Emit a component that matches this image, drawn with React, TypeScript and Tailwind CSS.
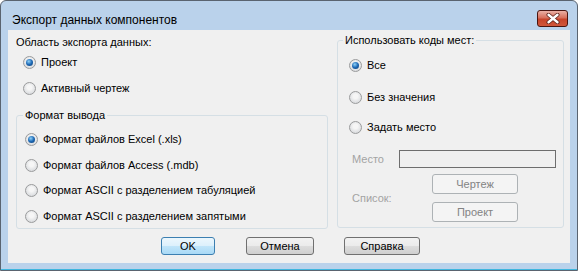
import React from 'react';

const Radio = ({ checked }: { checked?: boolean }) => (
  <span className="w-[13px] h-[13px] shrink-0 rounded-full border border-[#9a9b9c] bg-[radial-gradient(circle_at_50%_40%,#f6f6f6_25%,#cdd0d4)] flex items-center justify-center">
    {checked && (
      <span className="w-[7px] h-[7px] rounded-full bg-[radial-gradient(circle_at_40%_35%,#8fd2f8,#1d68b5_50%,#0c3b6d)]" />
    )}
  </span>
);

const RadioRow = ({ label, checked, className }: { label: string; checked?: boolean; className: string }) => (
  <div className={'flex items-center h-[20px] ' + className}>
    <Radio checked={checked} />
    <span className="ml-[5px] leading-[14px]">{label}</span>
  </div>
);

const Btn = ({ label, w, primary }: { label: string; w: string; primary?: boolean }) => (
  <button
    className={
      'h-[18px] rounded-[3px] border leading-[14px] text-black ' +
      w +
      (primary
        ? ' border-[#3c7fb1] bg-[linear-gradient(#ecf7fd,#dcf0fc_50%,#c1e5fa_50%,#a9d9f6)]'
        : ' border-[#707070] bg-[linear-gradient(#f2f2f2,#ebebeb_50%,#dddddd_50%,#cfcfcf)]')
    }
  >
    {label}
  </button>
);

const DisabledBtn = ({ label }: { label: string }) => (
  <button className="w-[86px] h-[20px] rounded-[3px] border border-[#adb2b5] bg-[#f4f4f4] text-[#838383] leading-[14px]">
    {label}
  </button>
);

export default function App() {
  return (
    <div className="w-[578px] h-[271px] flex flex-col bg-[#bad2eb] border border-[#5a6470] rounded-t-[6px] text-[11px] text-black font-['Liberation_Sans',Arial,sans-serif]">
      {/* title bar */}
      <div className="h-[29px] flex items-start justify-between pl-[11px] pr-[9px]">
        <span className="mt-[12px] text-[12px] leading-[14px]">Экспорт данных компонентов</span>
        <button className="mt-[9px] w-[31px] h-[17px] rounded-[3px] border border-[#4a1510] bg-[linear-gradient(#eab0a5,#d8705c_45%,#c7442b_55%,#d0573b)] flex items-center justify-center">
          <svg width="14" height="11" viewBox="0 0 14 11">
            <path d="M2.5 1.8 L11.5 9.2 M11.5 1.8 L2.5 9.2" stroke="#5b2018" strokeWidth="4" strokeLinecap="round" />
            <path d="M2.5 1.8 L11.5 9.2 M11.5 1.8 L2.5 9.2" stroke="#ffffff" strokeWidth="2.4" strokeLinecap="round" />
          </svg>
        </button>
      </div>

      {/* client area */}
      <div className="mx-[7px] h-[233px] bg-[#f0f0f0] flex flex-col">
        <div className="flex pl-[8px]">
          {/* left column */}
          <div className="w-[312px] flex flex-col pt-[5px]">
            <div className="leading-[14px]">Область экспорта данных:</div>
            <RadioRow className="mt-[3px] pl-[7px]" label="Проект" checked />
            <RadioRow className="mt-[6px] pl-[7px]" label="Активный чертеж" />
            <fieldset className="mt-[10px] h-[121px] border border-[#d5dfe5] rounded-[3px]">
              <legend className="ml-[6px] px-[2px] leading-[14px]">Формат вывода</legend>
              <div className="flex flex-col pl-[8px]">
                <RadioRow className="mt-[7px]" label="Формат файлов Excel (.xls)" checked />
                <RadioRow className="mt-[6px]" label="Формат файлов Access (.mdb)" />
                <RadioRow className="mt-[5px]" label="Формат ASCII с разделением табуляцией" />
                <RadioRow className="mt-[6px]" label="Формат ASCII с разделением запятыми" />
              </div>
            </fieldset>
          </div>

          {/* right column */}
          <fieldset className="ml-[9px] mt-[3px] w-[227px] h-[195px] border border-[#d5dfe5] rounded-[3px]">
            <legend className="ml-[5px] px-[2px] leading-[14px]">Использовать коды мест:</legend>
            <div className="flex flex-col pl-[11px] pr-[7px]">
              <RadioRow className="mt-[8px]" label="Все" checked />
              <RadioRow className="mt-[12px]" label="Без значения" />
              <RadioRow className="mt-[10px]" label="Задать место" />
              <div className="mt-[13px] flex items-center h-[18px]">
                <span className="ml-[3px] w-[47px] text-[#a3a3a3] leading-[14px]">Место</span>
                <div className="flex-1 h-[18px] border border-[#6e6e6e] bg-[#f0f0f0]" />
              </div>
              <div className="mt-[6px] flex items-center">
                <span className="ml-[3px] w-[80px] text-[#a3a3a3] leading-[14px]">Список:</span>
                <div className="flex flex-col gap-[8px]">
                  <DisabledBtn label="Чертеж" />
                  <DisabledBtn label="Проект" />
                </div>
              </div>
            </div>
          </fieldset>
        </div>

        {/* dialog buttons */}
        <div className="mt-[8px] flex pl-[153px]">
          <Btn label="OK" w="w-[54px]" primary />
          <div className="ml-[31px]">
            <Btn label="Отмена" w="w-[68px]" />
          </div>
          <div className="ml-[30px]">
            <Btn label="Справка" w="w-[76px]" />
          </div>
        </div>
      </div>
      <div className="flex-1 border-b border-[#3fb6de]" />
    </div>
  );
}
